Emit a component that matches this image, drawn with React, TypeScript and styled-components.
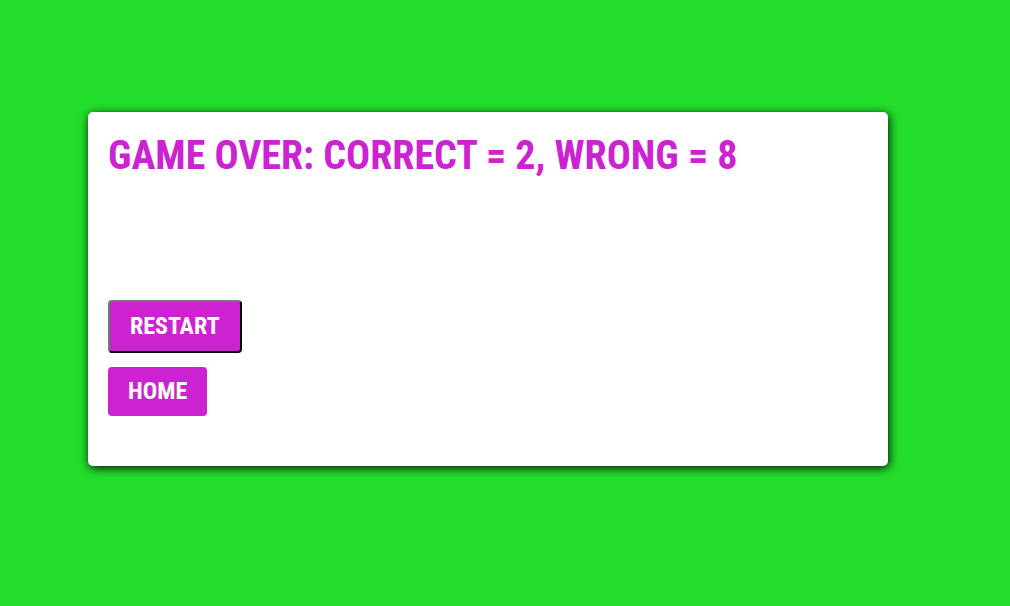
import React from 'react';
import styled, { createGlobalStyle } from 'styled-components';

const GlobalStyle = createGlobalStyle`
    html, body {
        margin: 0;
        padding: 0;
        background: #22dd2a;
        font-family: Roboto, 'Liberation Sans', sans-serif;
        font-stretch: condensed;
    }
`;

const Page = styled.div`
    min-height: 606px;
    box-sizing: border-box;
    padding: 112px 0 0 88px;
`;

const Card = styled.div`
    width: 800px;
    height: 354px;
    box-sizing: border-box;
    background: #ffffff;
    border-radius: 5px;
    box-shadow: 1px 2px 10px rgba(0, 0, 0, 0.95);
    padding: 20px;
    display: flex;
    flex-direction: column;
`;

const Title = styled.h1`
    margin: 0;
    font-size: 40px;
    line-height: 47px;
    font-weight: 700;
    font-stretch: condensed;
    color: #cc22d2;
`;

const QuestionArea = styled.div`
    height: 121px;
`;

const Actions = styled.div`
    display: flex;
    flex-direction: column;
    align-items: flex-start;
    gap: 14px;
`;

const Button = styled.button<{ $active?: boolean }>`
    font-family: Roboto, 'Liberation Sans', sans-serif;
    font-stretch: condensed;
    font-size: 24px;
    font-weight: 700;
    line-height: 29px;
    color: #ffffff;
    background: #cc22d2;
    border-radius: 4px;
    padding: 10px 20px;
    cursor: pointer;
    border: ${(p) => (p.$active ? '2px outset #555' : 'none')};
    border-color: ${(p) => (p.$active ? '#777 #222 #222 #777' : 'transparent')};
`;

const App: React.FC = () => {
    const correct = 2;
    const wrong = 8;

    return (
        <>
            <GlobalStyle />
            <Page>
                <Card>
                    <Title>
                        GAME OVER: CORRECT = {correct}, WRONG = {wrong}
                    </Title>
                    <QuestionArea />
                    <Actions>
                        <Button $active>RESTART</Button>
                        <Button>HOME</Button>
                    </Actions>
                </Card>
            </Page>
        </>
    );
};

export default App;
